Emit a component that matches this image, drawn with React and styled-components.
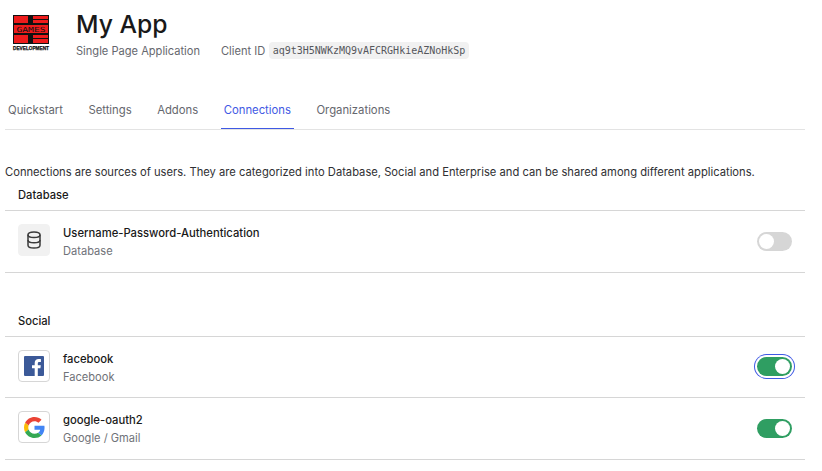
import React from 'react';
import styled, { createGlobalStyle } from 'styled-components';

const GlobalStyle = createGlobalStyle`
  html, body {
    margin: 0;
    padding: 0;
    background: #fff;
    font-family: 'Inter', 'Liberation Sans', sans-serif;
    color: #191919;
  }
  * { box-sizing: border-box; }
`;

const Page = styled.div`
  width: 822px;
  height: 471px;
  overflow: hidden;
  padding: 0 17px 0 5px;
`;

const Header = styled.header`
  display: flex;
  align-items: flex-start;
  gap: 24px;
  height: 91px;
  padding: 14px 0 0 7px;
`;

const LogoBox = styled.div`
  width: 40px;
  height: 40px;
  flex: none;
`;

const HeaderText = styled.div`
  display: flex;
  flex-direction: column;
  margin-top: -6px;
`;

const Title = styled.h1`
  margin: 0;
  font-size: 24.7px;
  line-height: 32px;
  font-weight: 500;
  color: #191919;
`;

const Meta = styled.div`
  display: flex;
  align-items: center;
  gap: 21px;
  margin-top: 2px;
  font-size: 11.1px;
  color: #65676e;
`;

const ClientId = styled.div`
  display: flex;
  align-items: center;
  gap: 3.5px;
`;

const Code = styled.code`
  font-family: 'DejaVu Sans Mono', monospace;
  font-size: 10px;
  line-height: 17px;
  padding: 0 4px;
  border-radius: 4px;
  background: #f1f1f1;
  color: #55575c;
`;

const Tabs = styled.nav`
  display: flex;
  gap: 19.5px;
  height: 39px;
  border-bottom: 1px solid #e3e3e3;
`;

const Tab = styled.a`
  display: block;
  height: 38px;
  padding: 0 3px;
  font-size: 11.3px;
  line-height: 38px;
  color: ${({ $active }) => ($active ? '#3f59e4' : '#65676e')};
  border-bottom: 1px solid ${({ $active }) => ($active ? '#3f59e4' : 'transparent')};
`;

const Intro = styled.p`
  margin: 34px 0 0;
  font-size: 11.2px;
  line-height: 16px;
  color: #2f3033;
`;

const Section = styled.section`
  margin-top: ${({ $gap }) => $gap}px;
`;

const SectionTitle = styled.h2`
  margin: 0;
  padding: 0 13px 7px;
  font-size: 11.2px;
  line-height: 15px;
  font-weight: 500;
  color: #191919;
  border-bottom: 1px solid #d6d6d6;
`;

const Row = styled.div`
  display: flex;
  align-items: center;
  height: 61.6px;
  padding: 0 13px 2px;
  border-bottom: 1px solid #d6d6d6;
`;

const IconBox = styled.div`
  display: flex;
  align-items: center;
  justify-content: center;
  width: 32px;
  height: 32px;
  flex: none;
  border-radius: 4px;
  background: ${({ $filled }) => ($filled ? '#f1f1f1' : '#fff')};
  border: 1px solid ${({ $filled }) => ($filled ? '#f1f1f1' : '#d6d6d6')};
`;

const Names = styled.div`
  display: flex;
  flex-direction: column;
  gap: 4px;
  margin: 4px 0 0 13px;
  flex: 1;
`;

const Name = styled.div`
  font-size: 11.25px;
  line-height: 14px;
  font-weight: 500;
  color: #191919;
`;

const Kind = styled.div`
  font-size: 11.1px;
  line-height: 14px;
  color: #6f7278;
`;

const Switch = styled.div`
  position: relative;
  width: 35px;
  height: 19px;
  flex: none;
  margin-top: 2px;
  border-radius: 10px;
  background: ${({ $on }) => ($on ? '#2f9e62' : '#d6d6d6')};
  ${({ $focus }) => $focus && `box-shadow: 0 0 0 2px #fff, 0 0 0 3px #3f59e4;`}
`;

const Knob = styled.span`
  position: absolute;
  top: 2px;
  left: ${({ $on }) => ($on ? '18px' : '2px')};
  width: 15px;
  height: 15px;
  border-radius: 50%;
  background: #fff;
`;

const GamesLogo = () => (
  <svg width="40" height="40" viewBox="0 0 40 40">
    <rect x="1" y="1" width="36" height="29" fill="#111" />
    <rect x="2" y="2" width="14" height="7" fill="#ee1c1c" />
    <rect x="21" y="2" width="15" height="3" fill="#ee1c1c" />
    <rect x="21" y="6" width="15" height="3" fill="#ee1c1c" />
    <rect x="2" y="11" width="34" height="8" fill="#ee1c1c" />
    <rect x="2" y="21" width="14" height="8" fill="#ee1c1c" />
    <rect x="21" y="21" width="15" height="3" fill="#ee1c1c" />
    <rect x="21" y="25" width="15" height="4" fill="#ee1c1c" />
    <text x="19" y="17.500" textAnchor="middle" fontFamily="'DejaVu Sans Mono', monospace" fontSize="7" fill="#111" textLength="29" lengthAdjust="spacingAndGlyphs">GAMES</text>
    <text x="19" y="36" textAnchor="middle" fontFamily="'Liberation Sans', sans-serif" fontSize="5" fontWeight="700" fill="#111" stroke="#111" strokeWidth="0.25" textLength="36" lengthAdjust="spacingAndGlyphs">DEVELOPMENT</text>
  </svg>
);

const DatabaseIcon = () => (
  <svg width="16" height="18" viewBox="0 0 16 18" fill="none" stroke="#3a3a3a" strokeWidth="1.5">
    <ellipse cx="8" cy="3.8" rx="6" ry="2.8" />
    <path d="M2 3.8v10.4c0 1.6 2.7 2.8 6 2.8s6-1.2 6-2.8V3.8" />
    <path d="M2 9c0 1.6 2.7 2.8 6 2.8S14 10.600 14 9" />
  </svg>
);

const FacebookIcon = () => (
  <svg width="20" height="20" viewBox="0 0 20 20">
    <rect width="20" height="20" rx="1" fill="#3b5998" />
    <path d="M13.800 20v-7.700h2.600l.4-3h-3V7.400c0-.9.3-1.500 1.500-1.500h1.600V3.200c-.3 0-1.200-.1-2.300-.1-2.300 0-3.900 1.400-3.900 4v2.200H8v3h2.700V20z" fill="#fff" />
  </svg>
);

const GoogleIcon = () => (
  <svg width="21" height="21" viewBox="0 0 48 48">
    <path fill="#EA4335" d="M24 9.500c3.540 0 6.710 1.220 9.210 3.600l6.850-6.850C35.900 2.380 30.470 0 24 0 14.620 0 6.510 5.380 2.560 13.220l7.980 6.190C12.430 13.720 17.740 9.500 24 9.500z" />
    <path fill="#4285F4" d="M46.980 24.550c0-1.570-.15-3.090-.38-4.550H24v9.020h12.940c-.58 2.960-2.260 5.480-4.780 7.180l7.730 6c4.510-4.180 7.090-10.360 7.090-17.650z" />
    <path fill="#FBBC05" d="M10.530 28.590c-.48-1.450-.76-2.990-.76-4.590s.27-3.140.76-4.590l-7.980-6.190C.92 16.460 0 20.120 0 24c0 3.880.92 7.540 2.560 10.780l7.970-6.190z" />
    <path fill="#34A853" d="M24 48c6.480 0 11.930-2.130 15.890-5.810l-7.730-6c-2.150 1.450-4.920 2.300-8.160 2.300-6.260 0-11.570-4.220-13.470-9.910l-7.980 6.190C6.510 42.620 14.620 48 24 48z" />
  </svg>
);

const tabs = ['Quickstart', 'Settings', 'Addons', 'Connections', 'Organizations'];

const Connection = ({ icon, filled, name, kind, on, focus }) => (
  <Row>
    <IconBox $filled={filled}>{icon}</IconBox>
    <Names>
      <Name>{name}</Name>
      <Kind>{kind}</Kind>
    </Names>
    <Switch $on={on} $focus={focus}>
      <Knob $on={on} />
    </Switch>
  </Row>
);

export default function App() {
  return (
    <Page>
      <GlobalStyle />
      <Header>
        <LogoBox>
          <GamesLogo />
        </LogoBox>
        <HeaderText>
          <Title>My App</Title>
          <Meta>
            <span>Single Page Application</span>
            <ClientId>
              <span>Client ID</span>
              <Code>aq9t3H5NWKzMQ9vAFCRGHkieAZNoHkSp</Code>
            </ClientId>
          </Meta>
        </HeaderText>
      </Header>
      <Tabs>
        {tabs.map(t => (
          <Tab key={t} $active={t === 'Connections'}>
            {t}
          </Tab>
        ))}
      </Tabs>
      <Intro>
        Connections are sources of users. They are categorized into Database, Social and Enterprise and can be shared among different applications.
      </Intro>
      <Section $gap={8}>
        <SectionTitle>Database</SectionTitle>
        <Connection
          icon={<DatabaseIcon />}
          filled
          name="Username-Password-Authentication"
          kind="Database"
        />
      </Section>
      <Section $gap={41}>
        <SectionTitle>Social</SectionTitle>
        <Connection icon={<FacebookIcon />} name="facebook" kind="Facebook" on focus />
        <Connection icon={<GoogleIcon />} name="google-oauth2" kind="Google / Gmail" on />
      </Section>
    </Page>
  );
}
